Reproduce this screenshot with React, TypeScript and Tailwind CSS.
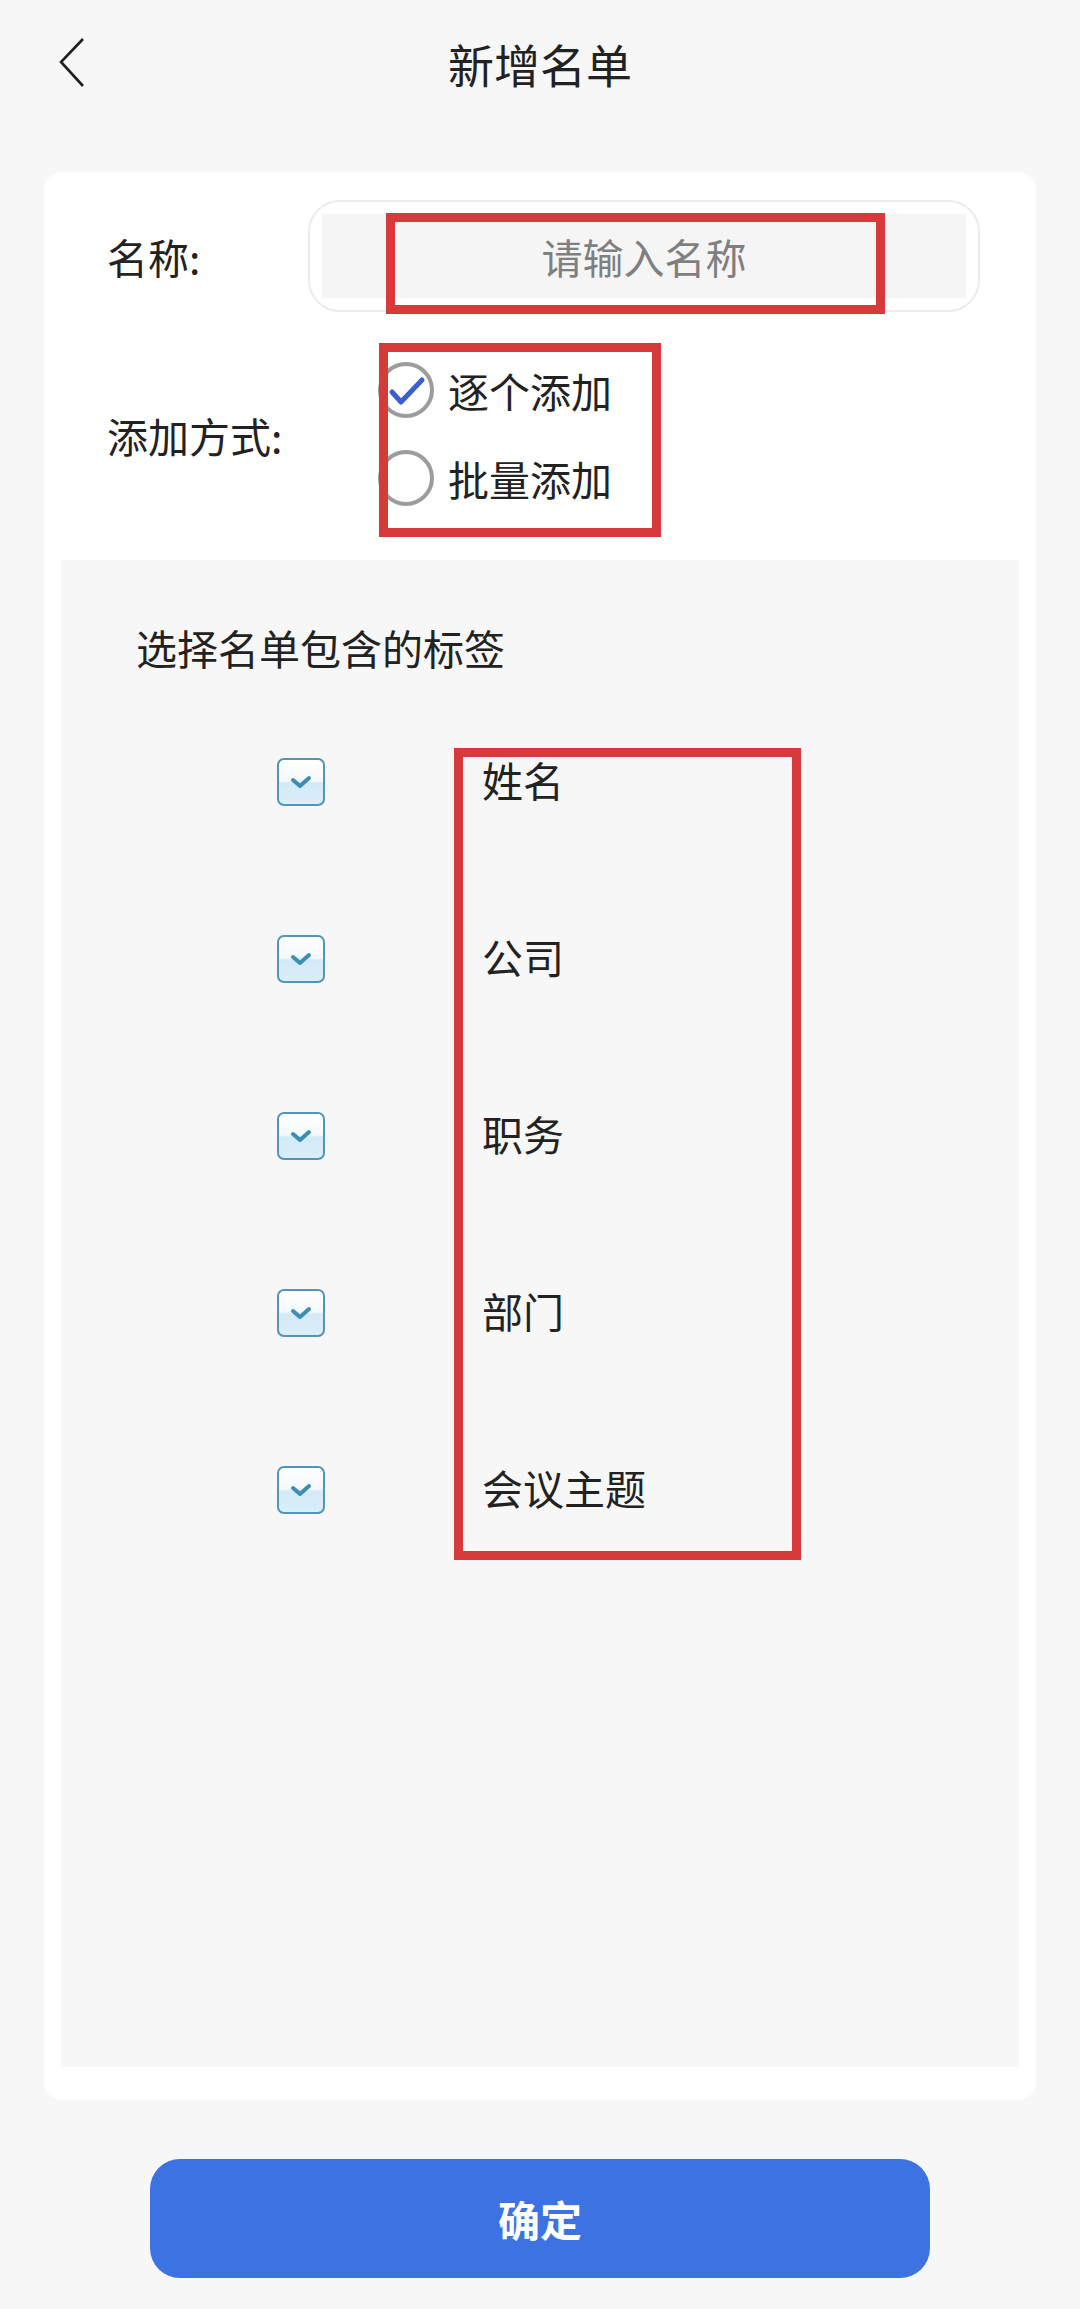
import React from "react";

const FONT = { fontFamily: '"Noto Sans CJK SC", "Noto Sans", sans-serif' };

function Checkbox() {
  return (
    <div className="w-[48px] h-[48px] rounded-[7px] border-[2.5px] border-[#5196ba] bg-[linear-gradient(to_bottom,#ffffff_0%,#f3f9fc_48%,#d3eaf7_52%,#dbeef9_100%)] flex items-center justify-center">
      <svg width="22" height="16" viewBox="0 0 22 16">
        <polyline points="3,6 10,12 19,4" fill="none" stroke="#3e8db5" strokeWidth="4" strokeLinecap="round" strokeLinejoin="round" />
      </svg>
    </div>
  );
}

function Radio({ checked }: { checked?: boolean }) {
  return (
    <div className="relative w-[56px] h-[56px] rounded-full border-[4px] border-[#9c9c9c] bg-white">
      {checked && (
        <svg className="absolute left-[6px] top-[10px]" width="40" height="32" viewBox="0 0 40 32">
          <polyline points="4,16 13,26 34,4" fill="none" stroke="#3a5fcf" strokeWidth="5" strokeLinecap="round" strokeLinejoin="round" />
        </svg>
      )}
    </div>
  );
}

export default function App() {
  const tags = ["姓名", "公司", "职务", "部门", "会议主题"];
  return (
    <div className="w-[1080px] h-[2309px] bg-[#f7f7f7] flex flex-col text-[#222222]" style={FONT}>
      {/* Header */}
      <div className="relative h-[126px] flex items-center justify-center">
        <svg className="absolute left-[52px] top-[36px]" width="40" height="54" viewBox="0 0 40 54">
          <polyline points="31,3 9,26 31,50" fill="none" stroke="#1f1f1f" strokeWidth="2.6" strokeLinejoin="miter" />
        </svg>
        <div className="text-[46px] leading-none text-[#222222]">新增名单</div>
      </div>

      {/* Card */}
      <div className="mt-[46px] mx-[44px] w-[992px] h-[1928px] bg-white rounded-[18px] flex flex-col pt-[28px]">
        {/* Name row */}
        <div className="flex items-center h-[112px]">
          <div className="pl-[63px] w-[264px] text-[41px] leading-none">名称:</div>
          <div className="relative w-[672px] h-[112px] rounded-[32px] border-[2px] border-[#ececec] bg-white p-[12px]">
            <div className="w-full h-full bg-[#f5f5f5] flex items-center justify-center text-[41px] leading-none text-[#7f7f7f]">
              请输入名称
            </div>
            <div className="absolute left-[76px] top-[11px] w-[499px] h-[101px] border-[9px] border-[#d83a3c] pointer-events-none" />
          </div>
        </div>

        {/* Add mode */}
        <div className="flex items-center mt-[31px] h-[194px]">
          <div className="pl-[63px] w-[335px] text-[41px] leading-none -mt-[10px]">添加方式:</div>
          <div className="relative w-[282px] h-[194px]">
            <div className="flex flex-col pt-[19px] gap-[32px] -ml-[1px]">
              <div className="flex items-center gap-[14px] h-[56px]">
                <Radio checked />
                <span className="text-[41px] leading-none">逐个添加</span>
              </div>
              <div className="flex items-center gap-[14px] h-[56px]">
                <Radio />
                <span className="text-[41px] leading-none">批量添加</span>
              </div>
            </div>
            <div className="absolute inset-0 border-[9px] border-[#d83a3c] pointer-events-none" />
          </div>
        </div>

        {/* Tag panel */}
        <div className="mt-[23px] mx-[17px] h-[1507px] bg-[#f7f7f7] flex flex-col pt-[65px]">
          <div className="pl-[75px] text-[41px] leading-[44px]">选择名单包含的标签</div>
          <div className="relative mt-[23px] flex flex-col">
            {tags.map((t) => (
              <div key={t} className="h-[177px] flex items-center">
                <div className="ml-[216px] w-[205px] mt-[3px]">
                  <Checkbox />
                </div>
                <span className="text-[41px] leading-none -mt-[3px]">{t}</span>
              </div>
            ))}
            <div className="absolute left-[393px] top-[56px] w-[347px] h-[812px] border-[9px] border-[#d83a3c] pointer-events-none" />
          </div>
        </div>
      </div>

      {/* Button */}
      <div className="mt-[59px] flex justify-center">
        <button className="w-[780px] h-[119px] rounded-[30px] bg-[#3d72e2] text-white text-[42px] font-bold leading-none">
          确定
        </button>
      </div>
    </div>
  );
}
